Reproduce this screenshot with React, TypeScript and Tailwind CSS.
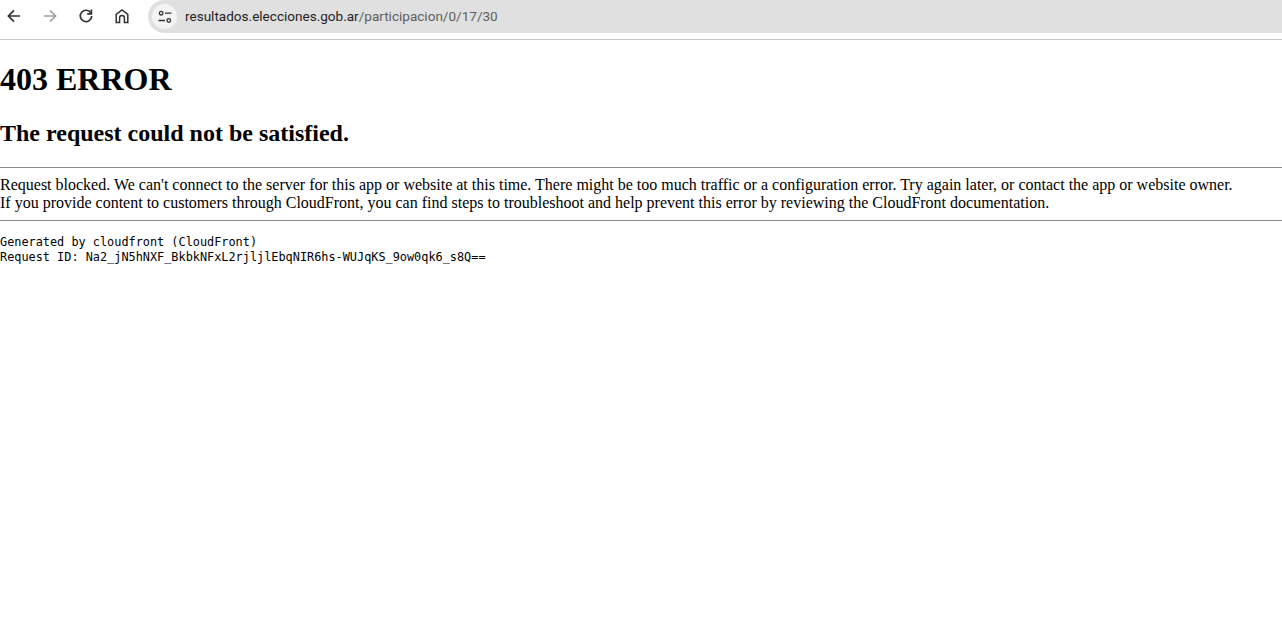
import React from 'react';

const TopBar = () => (
  <div className="flex h-10 border-b border-[#c8c8c8] bg-white">
    <div className="flex w-[148px] shrink-0 items-start pt-[4px]">
      <span className="ml-[2px] flex h-6 w-6 items-center justify-center">
        <svg width="16" height="16" viewBox="0 0 16 16" fill="none" stroke="#333" strokeWidth="1.7">
          <path d="M14 8H2.6M8 2.4 2.4 8 8 13.6" />
        </svg>
      </span>
      <span className="ml-3 flex h-6 w-6 items-center justify-center">
        <svg width="16" height="16" viewBox="0 0 16 16" fill="none" stroke="#a3a3a3" strokeWidth="1.7">
          <path d="M2 8h11.4M8 2.4 13.6 8 8 13.6" />
        </svg>
      </span>
      <span className="ml-3 flex h-6 w-6 items-center justify-center">
        <svg width="16" height="16" viewBox="0 0 16 16" fill="none" stroke="#333" strokeWidth="1.7">
          <path d="M13 5.2A5.7 5.7 0 1 0 13.7 8" />
          <path d="M13.4 1.6v4.2H9.2" />
        </svg>
      </span>
      <span className="ml-3 flex h-6 w-6 items-center justify-center">
        <svg width="16" height="16" viewBox="0 0 16 16" fill="none" stroke="#333" strokeWidth="1.5">
          <path d="M2.2 14.4V6.4L8 2l5.8 4.4v8h-3.4V9.8a2.4 2.4 0 0 0-4.8 0v4.6z" />
        </svg>
      </span>
    </div>
    <div className="flex h-[33px] flex-1 items-center rounded-l-[17px] bg-[#e0e0e0] pl-1">
      <span className="flex h-[25px] w-[25px] items-center justify-center rounded-full bg-[#f4f4f4]">
        <svg width="16" height="16" viewBox="0 0 16 16" fill="none" stroke="#333" strokeWidth="1.3">
          <circle cx="4.2" cy="4.2" r="1.8" />
          <path d="M8 4.2h6.5M1.5 11.5H8" />
          <circle cx="11.8" cy="11.5" r="1.8" />
        </svg>
      </span>
      <span className="ml-[8px] font-['Roboto',sans-serif] text-[13.55px] text-[#1f1f1f]">
        resultados.elecciones.gob.ar<span className="text-[#5f5f5f]">/participacion/0/17/30</span>
      </span>
    </div>
  </div>
);

export default function App() {
  return (
    <div className="min-h-[626px] bg-white font-['Liberation_Serif',serif] text-black">
      <TopBar />
      <h1 className="mt-[21px] text-[32px] leading-[37px] font-bold">403 ERROR</h1>
      <h2 className="mt-[22px] text-2xl leading-[27px] font-bold">The request could not be satisfied.</h2>
      <hr className="mt-[20px] border-[#8c8c8c]" />
      <div className="mt-2 text-base leading-[18px]">
        Request blocked. We can't connect to the server for this app or website at this time. There might be too much traffic or a configuration error. Try again later, or contact the app or website owner.
        <br />
        If you provide content to customers through CloudFront, you can find steps to troubleshoot and help prevent this error by reviewing the CloudFront documentation.
      </div>
      <hr className="mt-2 border-[#8c8c8c]" />
      <pre className="mt-[14px] font-['DejaVu_Sans_Mono',monospace] text-[11.87px] leading-[15px]">
        Generated by cloudfront (CloudFront)
        {'\n'}Request ID: Na2_jN5hNXF_BkbkNFxL2rjljlEbqNIR6hs-WUJqKS_9ow0qk6_s8Q==
      </pre>
    </div>
  );
}
